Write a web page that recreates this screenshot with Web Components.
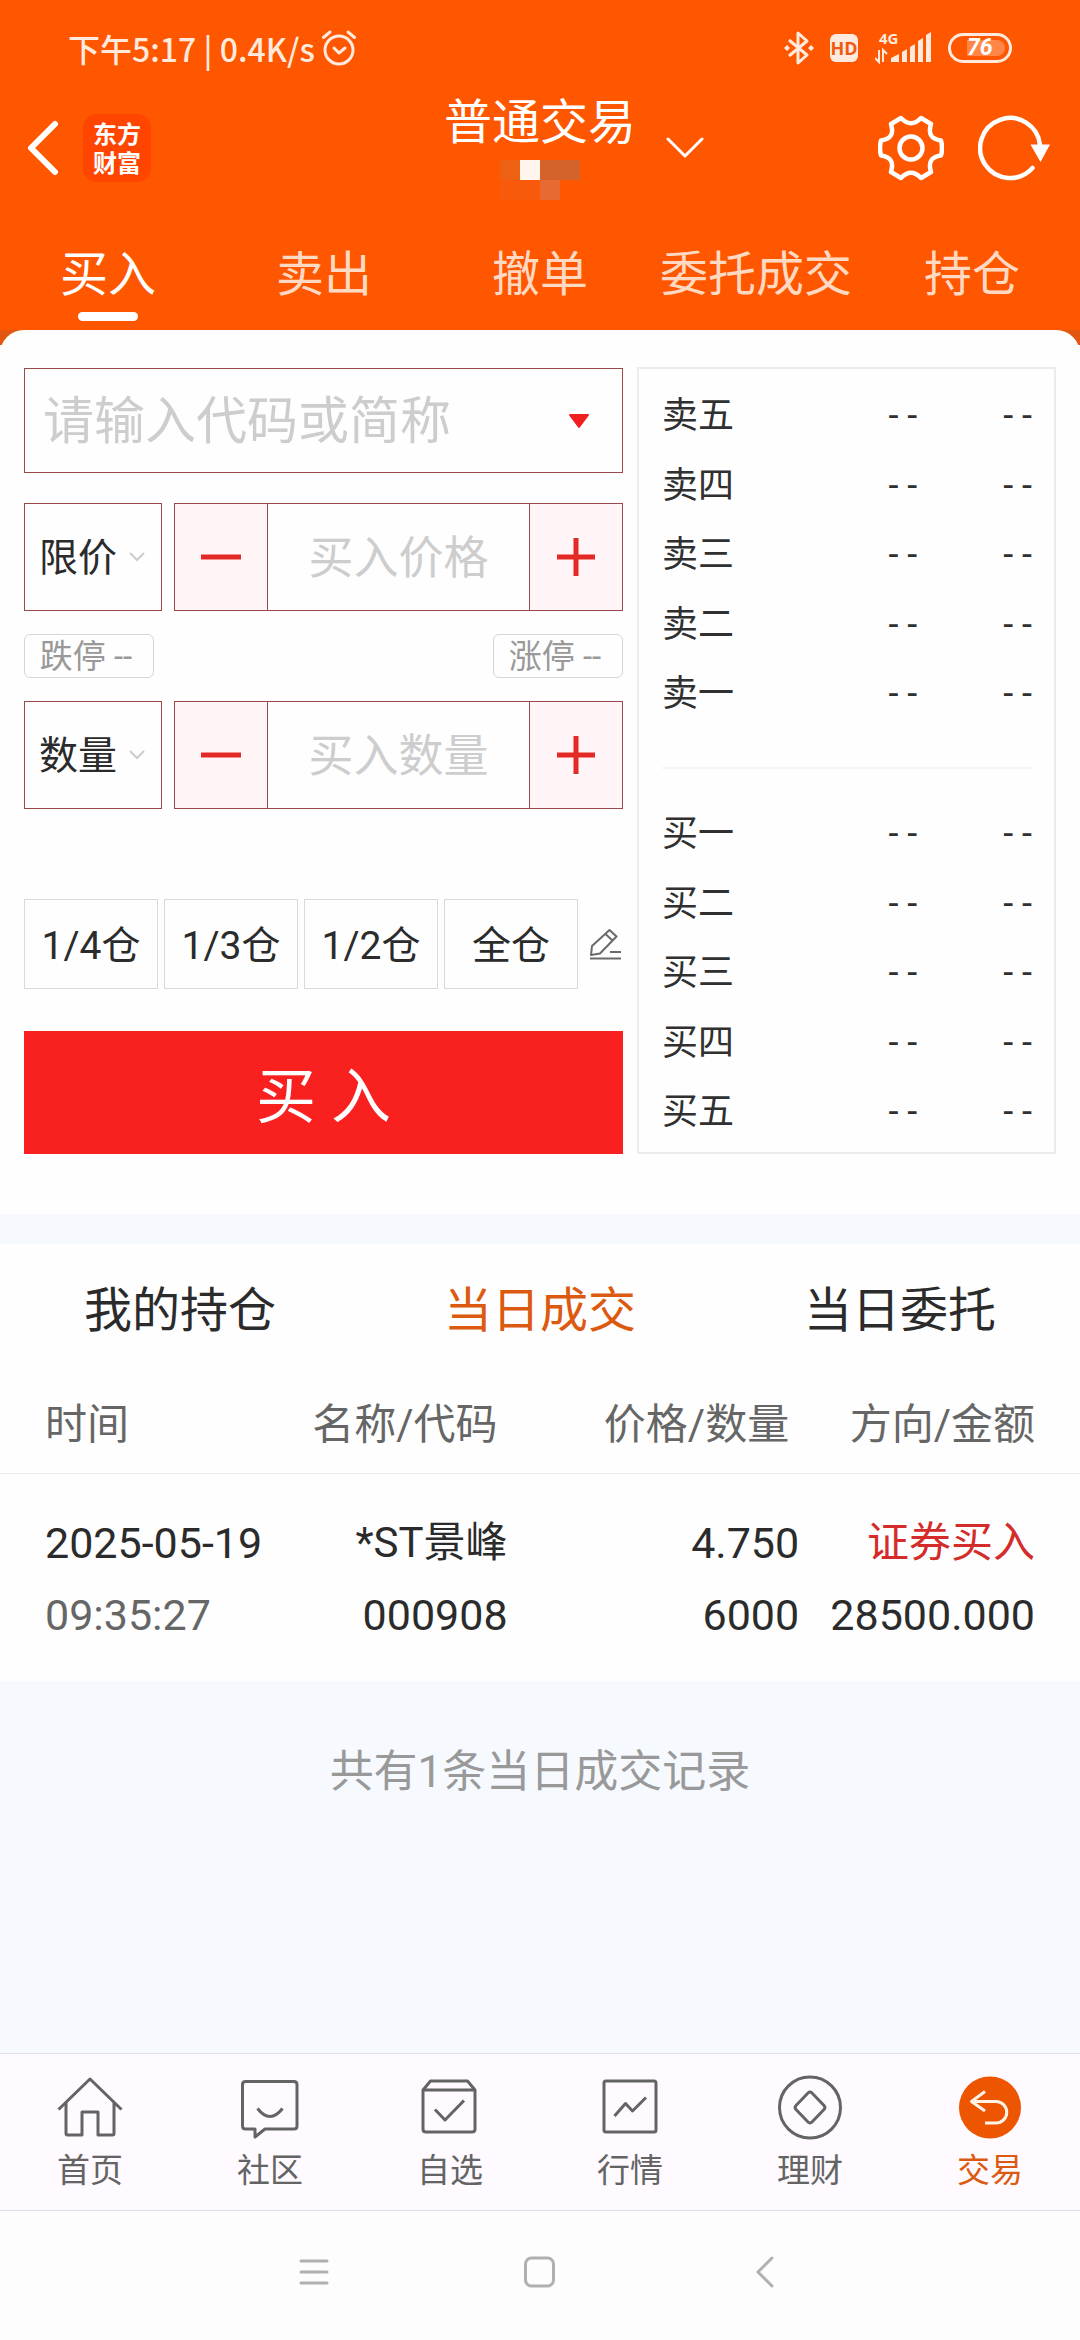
<!DOCTYPE html>
<html lang="zh-CN">
<head>
<meta charset="utf-8">
<meta name="viewport" content="width=device-width, initial-scale=1">
<title>普通交易</title>
<style>
  html, body { margin: 0; }
  body { background: #f6faff; color: #2b2b2b; font-family: Roboto, "Noto Sans CJK SC", sans-serif; }
</style>
</head>
<body>
<trade-app></trade-app>

<script>
const BASE = `
  *, *::before, *::after { box-sizing: border-box; }
  svg { display: block; fill: none; stroke: currentColor; flex: none; }
  svg.solid { stroke: none; }
  button, input, select { font: inherit; color: inherit; margin: 0; padding: 0; border: 0; border-radius: 0; background: none; min-width: 0; }
  button { cursor: pointer; }
  a { color: inherit; text-decoration: none; }
`;
function define(name, render) {
  customElements.define(name, class extends HTMLElement {
    constructor() {
      super();
      this.attachShadow({ mode: 'open' });
    }
    connectedCallback() {
      const { css, html } = render(this);
      this.shadowRoot.innerHTML = `<style>${BASE}${css}</style>${html}`;
    }
  });
}

/* Phone status bar */
define('status-bar', () => ({
  css: `
    :host { display: flex; align-items: center; justify-content: space-between; height: 96px; padding: 0 68px; color: #ffeadd; }
    .side { display: flex; align-items: center; }
    .left { gap: 6px; font: 500 32px/40px "Noto Sans CJK SC", sans-serif; }
    .hd { width: 28px; height: 28px; margin: 0 17px 0 16px; border-radius: 6px; background: #ffeadd; color: #f05a10; font: 700 18px/29px "Open Sans", sans-serif; text-align: center; }
    .battery { width: 64px; height: 30px; margin-left: 16px; padding: 4px; border: 3px solid #ffeadd; border-radius: 15px; display: flex; }
    .battery span { flex: 1; margin-left: 12px; border-radius: 0 8px 8px 0; background: #ff8647; }
    .battery b { display: block; width: 28px; color: #fff; font: italic 700 23px/16px Roboto, sans-serif; }
    text { fill: currentColor; stroke: none; font: 700 15px "Open Sans", sans-serif; }
  `,
  html: `
    <div class="side left"><span>下午5:17 | 0.4K/s</span>
      <svg width="36" height="36" viewBox="0 0 36 36" stroke-width="3" stroke-linecap="round" stroke-linejoin="round">
        <circle cx="18" cy="20" r="14"/><path d="M2.500 7.500 9 2M33.500 7.500 27 2M13 18l5 5 6-5"/></svg>
    </div>
    <div class="side">
      <svg width="30" height="36" viewBox="0 0 30 36" stroke-width="3" stroke-linejoin="round">
        <path d="M5 10l18 15-9 8V3l9 8L5 26"/><path d="M3 15l3 3-3 3-3-3zM27 15l3 3-3 3-3-3z" fill="currentColor" stroke="none"/></svg>
      <span class="hd">HD</span>
      <svg class="solid" width="57" height="44" viewBox="0 -6 57 44">
        <text x="4" y="12">4G</text>
        <path fill="currentColor" d="M16 30v-4l8-4v8zM27 20l5-3v13h-5zM35 15l5-3v18h-5zM43 9l5-3v24h-5zM51 3l5-3v30h-5z"/>
        <path stroke="currentColor" stroke-width="2" d="M4 18v12L0 26M8 30V18l4 4"/></svg>
      <div class="battery"><span><b>76</b></span></div>
    </div>`
}));

/* Title row */
define('app-header', () => ({
  css: `
    :host { display: grid; grid-template-columns: 1fr auto 1fr; align-items: center; height: 104px; padding: 0 27px; color: #fff; }
    .start { display: flex; align-items: center; gap: 24px; }
    .logo { width: 68px; height: 68px; padding: 4px 0; border-radius: 14px; background: #ff4500; text-align: center; font: 700 24px/29px "Noto Sans CJK SC", sans-serif; }
    .title { display: flex; flex-direction: column; align-items: center; gap: 10px; }
    h1 { margin: 0; font-weight: 400; font-size: 48px; line-height: 54px; }
    .end { display: flex; align-items: center; gap: 34px; padding-left: 30px; }
    .end button:first-child { margin-right: auto; }
  `,
  html: `
    <div class="start">
      <button aria-label="返回"><svg width="32" height="56" viewBox="0 0 32 56" stroke-width="6" stroke-linecap="round" stroke-linejoin="round"><path d="M28 4 4 28l24 24"/></svg></button>
      <div class="logo">东方<br>财富</div>
    </div>
    <div class="title">
      <h1>普通交易</h1>
      <svg class="solid" width="80" height="40" viewBox="0 0 80 40" shape-rendering="crispEdges">
        <path fill="#ee6012" d="M0 0h20v20H0z"/><path fill="#fff5ed" d="M20 0h20v20H20z"/><path fill="#d4632b" d="M40 0h40v20H40z"/>
        <path fill="#f9590b" d="M0 20h40v20H0z"/><path fill="#e76a33" d="M40 20h20v20H40z"/></svg>
    </div>
    <div class="end">
      <button aria-label="切换账户"><svg width="38" height="22" viewBox="0 0 38 22" stroke-width="3" stroke-linecap="round" stroke-linejoin="round"><path d="M2 2l17 17L36 2"/></svg></button>
      <button aria-label="设置"><svg width="66" height="66" viewBox="0 0 66 66" stroke-width="4.500" stroke-linejoin="round"><path d="M23 3Q33 13.500 43 3L53 9C50 19 53 24 63 25.500Q65 33 63 40.500C53 42 50 47 53 57L43 63Q33 52.500 23 63L13 57C16 47 13 42 3 40.500Q1 33 3 25.500C13 24 16 19 13 9Z"/><circle cx="33" cy="33" r="11.500"/></svg></button>
      <button aria-label="刷新"><svg width="75" height="66" viewBox="0 0 75 66" stroke-width="4.500" stroke-linecap="round"><path d="M62 30A30 30 0 1 0 54.500 53"/><path d="M52.500 29.500h19.500L62.500 47z" fill="currentColor" stroke="none"/></svg></button>
    </div>`
}));

/* Top-level sections */
define('section-tabs', el => ({
  css: `
    :host { display: block; color: #ffd9c2; }
    nav { display: flex; padding-top: 43px; }
    a { flex: 1; display: flex; flex-direction: column; align-items: center; gap: 5px; padding-bottom: 9px; font-size: 48px; line-height: 64px; white-space: nowrap; }
    a::after { content: ""; width: 60px; height: 9px; border-radius: 5px; }
    a[aria-current] { color: #fff; }
    a[aria-current]::after { background: #fff; }
  `,
  html: `<nav>${el.getAttribute('items').split(',').map((t, i) => `<a href="#"${i ? '' : ' aria-current="page"'}>${t}</a>`).join('')}</nav>`
}));

/* Type selector with a minus / value / plus field */
define('stepper-field', el => ({
  css: `
    :host { display: flex; gap: 12px; height: 108px; }
    .kind { display: grid; grid-template-columns: 1fr 18px; align-items: center; width: 138px; padding: 0 15px 0 14px; border: 1px solid #98494b; }
    select { grid-area: 1 / 1 / 2 / 3; height: 100%; padding-top: 2px; appearance: none; font-size: 39px; color: #2b2b2b; }
    .kind svg { grid-area: 1 / 2; color: #ccc; pointer-events: none; }
    .step { flex: 1; display: grid; grid-template-columns: 92px minmax(0, 1fr) 92px; border: 1px solid #98494b; }
    button { display: grid; place-items: center; background: #fff5f6; color: #e32826; }
    input { padding-top: 2px; border: solid #98494b; border-width: 0 1px; font-size: 45px; text-align: center; }
    input::placeholder { color: #cdcdcd; opacity: 1; }
  `,
  html: `
    <div class="kind">
      <select aria-label="${el.getAttribute('kind')}"><option>${el.getAttribute('kind')}</option></select>
      <svg width="18" height="12" viewBox="0 0 18 12" stroke-width="2"><path d="M2 2l7 7 7-7"/></svg>
    </div>
    <div class="step">
      <button aria-label="减少"><svg width="40" height="40" viewBox="0 0 40 40" stroke-width="5"><path d="M0 20h40"/></svg></button>
      <input aria-label="${el.getAttribute('hint')}" placeholder="${el.getAttribute('hint')}">
      <button aria-label="增加"><svg width="40" height="40" viewBox="0 0 40 40" stroke-width="5"><path d="M1 20h38M20 1v38"/></svg></button>
    </div>`
}));

/* Order form */
define('order-form', () => ({
  css: `
    :host { display: flex; flex-direction: column; }
    .search { display: flex; height: 105px; margin-bottom: 30px; border: 1px solid #98494b; }
    .search input { flex: 1; padding: 2px 0 0 18px; font-size: 51px; }
    input::placeholder { color: #cdcdcd; opacity: 1; }
    .search button { padding: 0 32px; color: #f02020; }
    .limits { display: flex; justify-content: space-between; margin: 23px 0; }
    .limits button { width: 130px; height: 44px; border: 1px solid #d6d6d6; border-radius: 6px; padding: 2px 6px 0 0; color: #999; font-size: 33px; line-height: 40px; }
    .parts { display: grid; grid-template-columns: repeat(4, 1fr) 39px; gap: 6px; margin: 90px 0 42px; }
    .parts button { height: 90px; padding-bottom: 4px; border: 1px solid #d9d9dc; font-size: 39px; }
    .parts .edit { display: grid; place-items: center end; border: 0; padding: 0 2px 0 0; color: #6a6a6a; }
    .buy { height: 123px; padding-bottom: 2px; background: #f82120; color: #fff; font-size: 60px; }
  `,
  html: `
    <div class="search">
      <input aria-label="股票代码" placeholder="请输入代码或简称">
      <button aria-label="展开列表"><svg width="22" height="16" viewBox="0 0 22 16" stroke-width="2" stroke-linejoin="round"><path fill="currentColor" d="M2 2h18l-9 12z"/></svg></button>
    </div>
    <stepper-field kind="限价" hint="买入价格"></stepper-field>
    <div class="limits"><button>跌停 --</button><button>涨停 --</button></div>
    <stepper-field kind="数量" hint="买入数量"></stepper-field>
    <div class="parts">
      <button>1/4仓</button><button>1/3仓</button><button>1/2仓</button><button>全仓</button>
      <button class="edit" aria-label="编辑仓位"><svg width="31" height="32" viewBox="0 0 31 32" stroke-width="2" stroke-linejoin="round"><path d="M1 27l1-9L19.500 2l7 6.500L10 25.500zM15.500 6l7 6.500M20 24h11M0 30.500h31"/></svg></button>
    </div>
    <button class="buy">买 入</button>`
}));

/* Five-level quotes */
define('quote-book', () => {
  const rows = (side, levels) => '<colgroup><col style="width:37%"><col style="width:32%"><col style="width:31%"></colgroup>' +
    levels.map(n => `<tr><th scope="row">${side}${n}</th><td>- -</td><td>- -</td></tr>`).join('');
  return {
    css: `
      :host { display: block; border: 2px solid #ececee; padding: 13px 22px 0 23px; }
      table { width: 100%; height: 348px; border-collapse: collapse; table-layout: fixed; font-size: 36px; line-height: 68px; color: #303030; }
      th, td { padding: 0; font-weight: 400; vertical-align: baseline; }
      th { text-align: left; }
      td { text-align: right; }
      hr { height: 2px; margin: 37px 0 31px; border: 0; background: #f5f5f6; }
    `,
    html: `<table aria-label="卖盘">${rows('卖', [...'五四三二一'])}</table><hr><table aria-label="买盘">${rows('买', [...'一二三四五'])}</table>`
  };
});

/* Today's records */
define('trade-records', () => ({
  css: `
    :host { display: block; background: #fefefe; border-top: 30px solid #f6faff; padding-bottom: 30px; }
    nav { display: flex; }
    nav a { flex: 1; text-align: center; font-size: 48px; line-height: 134px; }
    nav a[aria-current] { color: #dc5a10; }
    table { width: 100%; border-collapse: collapse; table-layout: fixed; font-size: 43px; }
    th, td { padding: 0; text-align: right; font-weight: 400; white-space: nowrap; }
    th { height: 95px; line-height: 94px; border-bottom: 1px solid #ececec; color: #666; }
    th, .cn { font-size: 42px; }
    th:nth-child(2), th:nth-child(3) { padding-right: 10px; }
    tr > :first-child { padding-left: 45px; text-align: left; }
    tr > :last-child { padding-right: 45px; }
    td { line-height: 72px; }
    tbody tr:first-child td { padding-top: 33px; }
    .muted { color: #666; }
    .buy { color: #d42c2a; }
  `,
  html: `
    <nav><a href="#">我的持仓</a><a href="#" aria-current="page">当日成交</a><a href="#">当日委托</a></nav>
    <table>
      <colgroup><col style="width:28%"><col style="width:19%"><col style="width:27%"><col style="width:26%"></colgroup>
      <thead><tr><th>时间</th><th>名称/代码</th><th>价格/数量</th><th>方向/金额</th></tr></thead>
      <tbody>
        <tr><td>2025-05-19</td><td class="cn">*ST景峰</td><td>4.750</td><td class="cn buy">证券买入</td></tr>
        <tr><td class="muted">09:35:27</td><td>000908</td><td>6000</td><td>28500.000</td></tr>
      </tbody>
    </table>`
}));

/* App navigation */
const NAV = [
  ['首页', '<path d="M1.500 34.500 33 4l31.500 30.500M9 28v30.500q0 1.500 1.500 1.500H25V37h16v23h14.500q1.500 0 1.500-1.500V28"/>'],
  ['社区', '<path d="M8 6.500h49q3 0 3 3V51q0 3-3 3H28l-10 8V54H8.500q-3 0-3-3V9.500q0-3 3-3z"/><path d="M20.500 33.500q12.500 16 25 0"/>'],
  ['自选', '<path d="M6 15 13.500 6h37L58 15v39q0 3-3 3H9q-3 0-3-3zH58M18 34.500 28 45l19-19.500"/>'],
  ['行情', '<rect x="7" y="6" width="52" height="51" rx="2"/><path d="M17.500 41l11-12.500 7 7.500L49 22.500"/>'],
  ['理财', '<circle cx="33" cy="32.500" r="30.500"/><path d="M31 18q2-2 4 0l12 12.500q2 2 0 4L35 47q-2 2-4 0L19 34.500q-2-2 0-4z"/>'],
  ['交易', '<circle cx="33" cy="32.500" r="31" fill="#ee5500" stroke="none"/><path stroke="#fff3e8" d="M28 16.500 14.500 26.500 28 36M14.500 26.500H39a10.500 10.500 0 0 1 0 21.500H28"/>']
];
define('app-nav', () => ({
  css: `
    :host { display: block; border: solid #e0e0e4; border-width: 1px 0; background: #fefaff; color: #646464; }
    nav { display: flex; }
    a { flex: 1; display: flex; flex-direction: column; align-items: center; gap: 10px; padding: 21px 0 19px; font-size: 33px; line-height: 40px; }
    a[aria-current] { color: #dc5a10; }
  `,
  html: `<nav>${NAV.map(([t, p]) => `<a href="#"${t === '交易' ? ' aria-current="page"' : ''}><svg width="66" height="66" viewBox="0 0 66 66" stroke-width="3" stroke-linejoin="round">${p}</svg>${t}</a>`).join('')}</nav>`
}));

/* Phone navigation keys */
define('system-keys', () => ({
  css: `
    :host { display: flex; justify-content: center; gap: 193px; padding: 45px 0 52px; background: #fdfdfd; color: #b0b0b0; }
  `,
  html: `
    <button aria-label="最近任务"><svg width="32" height="32" viewBox="0 0 32 32" stroke-width="3" stroke-linecap="round"><path d="M2 5h26M2 16h26M2 27h26"/></svg></button>
    <button aria-label="主屏幕"><svg width="32" height="32" viewBox="0 0 32 32" stroke-width="3"><rect x="1.500" y="2" width="28" height="28" rx="6"/></svg></button>
    <button aria-label="返回"><svg width="32" height="32" viewBox="0 0 32 32" stroke-width="3" stroke-linecap="round" stroke-linejoin="round"><path d="M23 2 9 16l14 14"/></svg></button>`
}));

define('trade-app', () => ({
  css: `
    :host { display: flex; flex-direction: column; min-height: 100vh; }
    header { background: #ff5600; }
    main { flex: 1; background: linear-gradient(#e2560f 15px, #f6faff 0); }
    .sheet { display: grid; grid-template-columns: minmax(0, 599fr) minmax(0, 419fr); gap: 14px; padding: 37px 24px 60px; border-radius: 24px 24px 0 0; background: #fefefe; }
    order-form { margin-top: 1px; }
    .count { margin: 0; padding: 61px 0 59px; text-align: center; color: #999; font-size: 44px; line-height: 60px; }
  `,
  html: `
    <header>
      <status-bar></status-bar>
      <app-header></app-header>
      <section-tabs items="买入,卖出,撤单,委托成交,持仓"></section-tabs>
    </header>
    <main>
      <div class="sheet"><order-form></order-form><quote-book></quote-book></div>
      <trade-records></trade-records>
      <p class="count">共有1条当日成交记录</p>
    </main>
    <app-nav></app-nav>
    <system-keys></system-keys>`
}));
</script>
</body>
</html>
